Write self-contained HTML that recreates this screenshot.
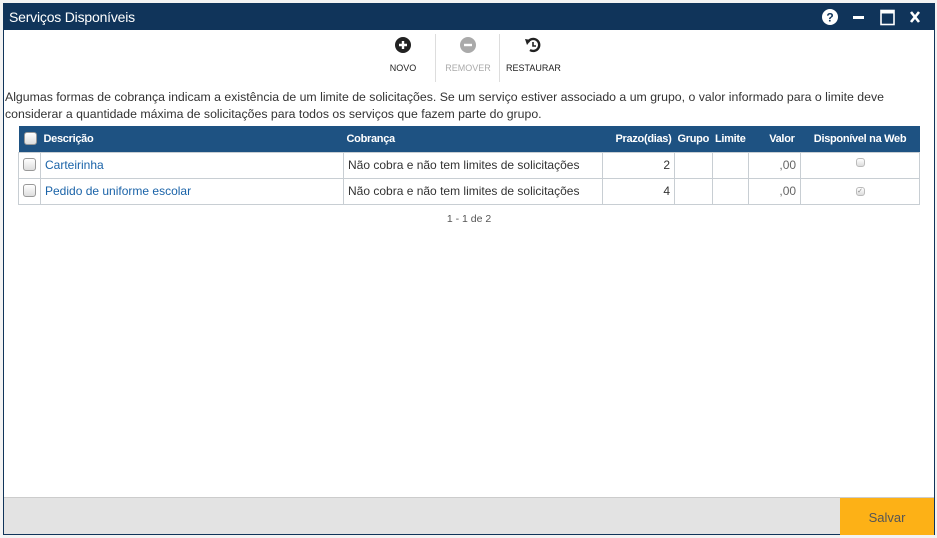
<!DOCTYPE html>
<html><head><meta charset="utf-8"><style>
*{box-sizing:border-box;margin:0;padding:0}
body{width:937px;height:538px;background:#f3f3f3;font-family:"Liberation Sans",sans-serif;position:relative;overflow:hidden}
.win{position:absolute;left:3px;top:3px;width:932px;height:532px;background:#fff;border:1px solid #10345a}
.title{position:absolute;left:0;top:0;right:0;height:26px;background:#10345a;color:#fff;font-size:14px;line-height:26px;padding-left:5px;letter-spacing:-.2px}
.tb{position:absolute;top:33px;font-size:9px;color:#222;text-align:center}
.sep{position:absolute;top:30px;width:1px;height:48px;background:#ddd}
.desc{position:absolute;left:1px;top:85px;width:920px;font-size:12.3px;color:#333;line-height:17px}
table{position:absolute;left:14px;top:122px;width:902px;border-collapse:collapse;font-size:12px}
th{background:#1e5282;color:#fff;font-size:11px;font-weight:bold;height:26px;text-align:left;padding:0 3px;letter-spacing:-.3px}
td{border:1px solid #c8ced3;height:26px;padding:0 4px;color:#333}
td a{color:#1a63a8}
.cb{display:inline-block;width:13px;height:13px;border:1px solid #999;border-radius:3px;background:linear-gradient(#fff,#ddd);vertical-align:middle}
.r{text-align:right}.c{text-align:center}
.foot{position:absolute;left:0;bottom:0;width:930px;height:37px;background:#e3e3e3;border-top:1px solid #ccc}
.salvar{position:absolute;right:0;top:0;width:94px;height:37px;background:#fdb116;color:#555;font-size:13px;text-align:center;line-height:40px}
</style></head><body>
<div class="win">
<div class="title">Serviços Disponíveis
<svg style="position:absolute;left:818px;top:5px" width="100" height="17">
<circle cx="8" cy="8" r="8" fill="#fff"/><text x="8" y="12.5" font-size="12" font-weight="bold" text-anchor="middle" fill="#10345a" font-family="Liberation Sans">?</text>
<rect x="31" y="7" width="11" height="3" fill="#fff"/>
<rect x="59" y="1.5" width="13" height="14" fill="none" stroke="#fff" stroke-width="1.6"/><rect x="59" y="1.5" width="13" height="3" fill="#fff"/>
<path d="M89 3 L97 13 M97 3 L89 13" stroke="#fff" stroke-width="2.6"/>
</svg></div>
<div class="tb" style="left:382px;width:34px"><svg width="16" height="16"><circle cx="8" cy="8" r="8" fill="#222"/><path d="M8 4v8M4 8h8" stroke="#fff" stroke-width="2.4"/></svg><div style="margin-top:8px">NOVO</div></div>
<div class="sep" style="left:431px"></div>
<div class="tb" style="left:440px;width:48px;color:#aaa"><svg width="16" height="16"><circle cx="8" cy="8" r="8" fill="#aaa"/><path d="M4 8h8" stroke="#fff" stroke-width="2.4"/></svg><div style="margin-top:8px">REMOVER</div></div>
<div class="sep" style="left:495px"></div>
<div class="tb" style="left:502px;width:54px"><svg width="18" height="16"><path d="M4 5 A6 6 0 1 1 6 13" fill="none" stroke="#222" stroke-width="2.4"/><path d="M1 2 L7 3 L3 8Z" fill="#222"/><path d="M9 5v4h3" fill="none" stroke="#222" stroke-width="1.6"/></svg><div style="margin-top:8px">RESTAURAR</div></div>
<div class="desc">Algumas formas de cobrança indicam a existência de um limite de solicitações. Se um serviço estiver associado a um grupo, o valor informado para o limite deve considerar a quantidade máxima de solicitações para todos os serviços que fazem parte do grupo.</div>
<table>
<tr><th style="width:22px;padding-left:5px"><span class="cb"></span></th><th style="width:303px">Descrição</th><th style="width:259px">Cobrança</th><th class="r" style="width:72px">Prazo(dias)</th><th style="width:36px">Grupo</th><th style="width:36px">Limite</th><th class="r" style="width:52px;padding-right:6px">Valor</th><th class="c">Disponível na Web</th></tr>
<tr><td style="padding-left:4px;vertical-align:top;padding-top:4px"><span class="cb"></span></td><td><a>Carteirinha</a></td><td>Não cobra e não tem limites de solicitações</td><td class="r">2</td><td></td><td></td><td class="r" style="color:#666">,00</td><td class="c"><span class="cb" style="width:9px;height:9px;border-color:#bbb;vertical-align:2px"></span></td></tr>
<tr><td style="padding-left:4px;vertical-align:top;padding-top:4px"><span class="cb"></span></td><td><a>Pedido de uniforme escolar</a></td><td>Não cobra e não tem limites de solicitações</td><td class="r">4</td><td></td><td></td><td class="r" style="color:#666">,00</td><td class="c"><span class="cb" style="width:9px;height:9px;border-color:#bbb;font-size:7px;line-height:7px;color:#888;vertical-align:2px">✓</span></td></tr>
</table>
<div style="position:absolute;left:0;width:930px;top:209px;text-align:center;font-size:10.5px;color:#555">1 - 1 de 2</div>
<div class="foot"><div class="salvar">Salvar</div></div>
</div>
</body></html>
